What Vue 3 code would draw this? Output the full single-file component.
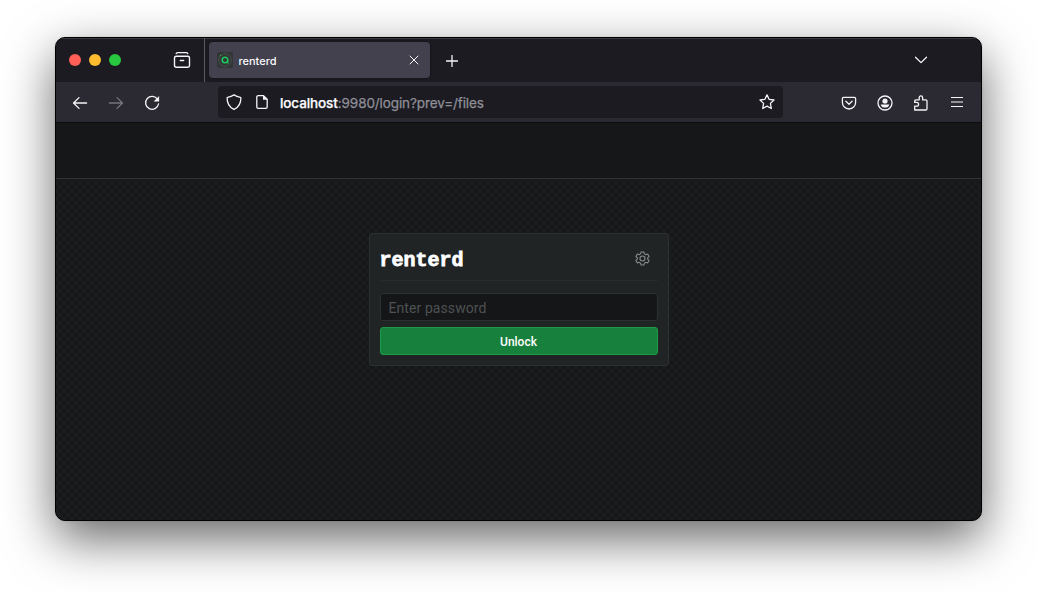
<script setup>
import { ref } from 'vue'

const password = ref('')
</script>

<template>
  <main class="desktop">
    <section class="window">
      <div class="tabbar">
        <div class="lights"><i class="red"></i><i class="yellow"></i><i class="green"></i></div>
        <svg class="ico recent" viewBox="0 0 18 18"><path d="M3.200 2.600C3.400 1.900 3.800 1.600 4.500 1.600h9c.7 0 1.100.3 1.300 1M3.200 5.200h11.600c1 0 1.700.7 1.700 1.700v7.600c0 1-.7 1.700-1.700 1.700H3.200c-1 0-1.700-.7-1.700-1.700V6.900c0-1 .7-1.700 1.700-1.700zM7.300 9.500h3.400" /></svg>
        <span class="divider"></span>
        <div class="tab">
          <svg class="favicon" viewBox="0 0 16 16">
            <rect width="16" height="16" rx="2" fill="#333536" />
            <circle cx="8" cy="8" r="6.3" fill="none" stroke="#4b5b50" stroke-width=".8" />
            <circle cx="8" cy="8" r="2.8" fill="none" stroke="#1ccb5b" stroke-width="1.5" />
            <path d="M10.8 8v3.2h.8" fill="none" stroke="#1ccb5b" stroke-width="1" />
            <circle cx="3.6" cy="3.6" r=".7" fill="#1ccb5b" />
          </svg>
          <span class="tab-title">renterd</span>
          <svg class="ico close" viewBox="0 0 10 10"><path d="M1 1l8 8M9 1l-8 8" /></svg>
        </div>
        <svg class="ico plus" viewBox="0 0 12 12"><path d="M6 .5v11M.5 6h11" /></svg>
        <svg class="ico chevron" viewBox="0 0 14 8"><path d="M1.5 1.2L7 6.600l5.500-5.400" /></svg>
      </div>

      <div class="navbar">
        <svg class="ico back" viewBox="0 0 16 16"><path d="M14.600 8H1.600M7 2.600L1.500 8 7 13.400" /></svg>
        <svg class="ico forward" viewBox="0 0 16 16"><path d="M1.400 8h13M9 2.600L14.500 8 9 13.400" /></svg>
        <svg class="ico reload" viewBox="0 0 16 16"><path d="M13.600 4.400A6.500 6.500 0 1 0 14.500 9" /><path class="solid" d="M15.100 1v5.500H9.600z" /></svg>
        <div class="urlbar">
          <svg class="ico shield" viewBox="0 0 16 16"><path d="M8 .9c2 1.300 4.200 2 6.400 2.400.3.100.5.400.5.700 0 5.200-2 8.900-6.400 11.100-.3.200-.7.200-1 0C3.100 12.900 1.100 9.200 1.100 4c0-.3.200-.6.500-.7C3.800 2.900 6 2.200 8 .9z" /></svg>
          <svg class="ico page" viewBox="0 0 16 16"><path d="M9.500 1.600H4.200c-.8 0-1.400.6-1.400 1.400v10c0 .8.6 1.400 1.400 1.400h7.600c.8 0 1.400-.6 1.400-1.400V5.200z" /><path class="solid" d="M9 1.200v4.500h4.500z" /></svg>
          <span class="url"><b>localhost</b>:9980/login?prev=/files</span>
          <svg class="ico star" viewBox="0 0 16 16"><path d="M8 .9l2.100 4.400 4.900.7-3.600 3.400.9 5.100L8 12.100l-4.300 2.400.9-5.100L1 6l4.900-.7z" /></svg>
        </div>
        <svg class="ico pocket" viewBox="0 0 16 16"><path d="M2.600 2.300h10.800c.7 0 1.200.5 1.200 1.200v3.900A6.600 6.600 0 0 1 1.400 7.400V3.500c0-.7.500-1.200 1.200-1.200zM4.900 6.200L8 9.200l3.100-3" /></svg>
        <svg class="ico account" viewBox="0 0 16 16"><circle cx="8" cy="8" r="7" /><circle class="solid" cx="8" cy="6" r="2.6" /><path class="solid" d="M3.700 9.400h8.600A4.500 4.500 0 0 1 8 12.600a4.500 4.500 0 0 1-4.300-3.200z" /></svg>
        <svg class="ico puzzle" viewBox="0 0 16 16"><path d="M1.700 15v-3.800h2a1.900 1.900 0 0 0 0-3.800h-2V6c0-.7.500-1.200 1.200-1.200h3.300V2.600a1.700 1.700 0 0 1 3.400 0v2.200h3.200c.7 0 1.200.5 1.200 1.200v7.800c0 .7-.5 1.200-1.200 1.200z" /></svg>
        <svg class="ico menu" viewBox="0 0 12 12"><path d="M.3 1.5h11.400M.3 6h11.400M.3 10.500h11.400" /></svg>
      </div>

      <div class="app-header"></div>

      <div class="app-body">
        <form class="card" @submit.prevent>
          <div class="card-head">
            <h1>renterd</h1>
            <svg class="gear" viewBox="0 0 16 16"><path d="M6.500 1h3l.5 2 1.500.9 2-.6 1.500 2.600-1.500 1.400v1.400l1.500 1.400-1.500 2.600-2-.6-1.500.9-.5 2h-3L6 13l-1.500-.9-2 .6L1 10.100l1.500-1.400V7.300L1 5.900l1.500-2.600 2 .6L6 3z" /><circle cx="8" cy="8" r="2.700" /></svg>
          </div>
          <input v-model="password" type="password" placeholder="Enter password" />
          <button type="submit">Unlock</button>
        </form>
      </div>
    </section>
  </main>
</template>

<style>
html, body { margin: 0; background: #fff; overflow: hidden; }
</style>

<style scoped>
* { box-sizing: border-box; }
.desktop { width: 1037px; height: 594px; padding: 37px 55px 73px; background: #fff; }
.window {
  display: flex; flex-direction: column; width: 927px; height: 484px; overflow: hidden;
  border: 1px solid #000; border-radius: 10px; background: #1a1b1c;
  box-shadow: 0 18px 50px rgba(0, 0, 0, .6), 0 0 2px rgba(0, 0, 0, .15);
}
.tabbar {
  display: flex; flex: none; align-items: center; height: 44px; background: #1c1b22;
  box-shadow: inset 0 1px #39383e;
}
.lights { display: flex; gap: 8px; margin-left: 13px; }
.lights i { width: 12px; height: 12px; border-radius: 50%; }
.red { background: #ff5f57; }
.yellow { background: #febc2e; }
.green { background: #28c840; }
.ico { flex: none; fill: none; stroke: #f5f5f8; stroke-width: 1.3; stroke-linecap: round; stroke-linejoin: round; }
.ico .solid { fill: #f5f5f8; stroke: none; }
.recent { width: 18px; height: 18px; margin-left: 52px; stroke-width: 1.4; }
.divider { width: 1px; height: 44px; margin-left: 13px; background: #5a595f; }
.tab {
  display: flex; align-items: center; width: 221px; height: 36px; margin-left: 4px; padding: 0 11px 0 8px;
  border-radius: 4px; background: #42414d; box-shadow: 0 0 3px rgba(0, 0, 0, .35);
}
.favicon { width: 16px; height: 16px; }
.tab-title { flex: 1; margin-left: 5.5px; padding-top: 2px; color: #fbfbfe; font: 500 11px/16px Inter, sans-serif; }
.close { width: 10px; height: 10px; stroke-width: 1; }
.plus { width: 12px; height: 12px; margin: 1px 0 0 15.5px; }
.chevron { width: 14px; height: 8px; margin: 0 53px 0 auto; }
.navbar {
  display: flex; flex: none; align-items: center; height: 41px; padding: 1px 18px 0 16px;
  border-bottom: 1px solid #0c0c0e; background: #2b2a33;
}
.back, .forward, .reload { width: 16px; height: 16px; }
.forward { margin-left: 20px; stroke: #77767d; }
.reload { margin-left: 20px; }
.urlbar {
  display: flex; align-items: center; width: 565px; height: 32px; margin: -1px 0 0 58px; padding: 0 8px;
  border-radius: 4px; background: #1c1b22;
}
.shield, .page, .star, .pocket, .account, .puzzle { width: 16px; height: 16px; }
.page { margin-left: 12px; }
.url {
  flex: 1; margin-left: 10px; padding-top: 2px; color: #8f8f97;
  font: 13.5px/18px Inter, sans-serif; letter-spacing: -.1px; white-space: nowrap; -webkit-text-stroke: .25px;
}
.url b { color: #fbfbfe; font-weight: 500; }
.pocket { margin-left: 58px; }
.account, .puzzle { margin-left: 20.2px; }
.menu { width: 12px; height: 12px; margin: -1px 0 0 auto; stroke-width: 1.2; }
.app-header { flex: none; height: 56px; border-bottom: 1px solid #313435; background: #161718; }
.app-body {
  flex: 1; padding-top: 54px;
  background-color: #1b1c1d;
  background-image: radial-gradient(circle, #151617 1.2px, transparent 2.6px), radial-gradient(circle, #151617 1.2px, transparent 2.6px);
  background-position: 0 0, 4px 4px; background-size: 8px 8px;
}
.card {
  display: flex; flex-direction: column; width: 300px; height: 133px; margin: 0 312px 0 313px; padding: 0 10px;
  border: 1px solid #2d3031; border-radius: 3px; background: #212425;
}
.card-head { display: flex; flex: none; align-items: center; justify-content: space-between; height: 47px; padding-right: 8.5px; border-bottom: 1px solid #282b2c; }
h1 { margin: 7px 0 0 -.5px; color: #fff; font: bold 20px/26px "Liberation Mono", monospace; -webkit-text-stroke: .8px #fff; }
.gear { width: 15px; height: 15px; margin-top: 2px; fill: none; stroke: #8b8f91; stroke-width: 1.1; stroke-linejoin: round; }
input {
  width: 100%; height: 28px; margin: 12px 0 0; padding: 2px 7.5px 0; border: 1px solid #2d3031; border-radius: 3px;
  outline: 0; background: #151617; color: #fff; font: 14px/20px Roboto, sans-serif; letter-spacing: .08px;
}
input::placeholder { color: #4d5254; opacity: 1; }
button {
  width: 100%; height: 28px; margin: 6px 0 0; padding: 1px 1px 0 0; border: 1px solid #1c9a48; border-radius: 3px;
  background: #18803d; color: #fff; font: 500 12px/16px Roboto, sans-serif;
}
</style>
